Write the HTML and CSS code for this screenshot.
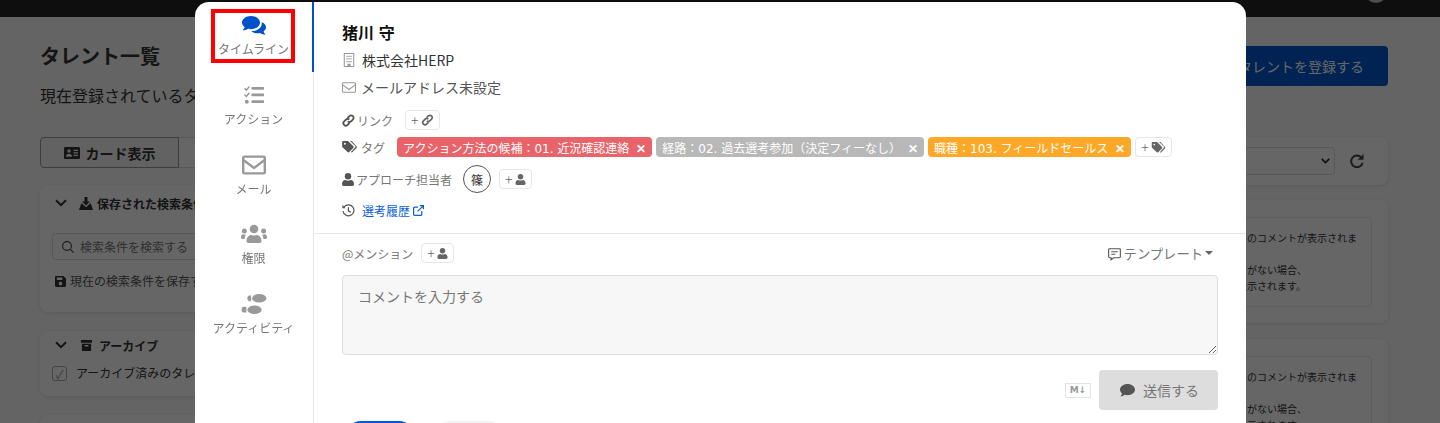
FILE: index.html
```html
<!DOCTYPE html>
<html lang="ja">
<head>
    <meta charset="UTF-8">
    <title>タレント一覧</title>
    <link rel="stylesheet" href="styles.css">
</head>
<body>

<svg class="sprite" xmlns="http://www.w3.org/2000/svg">
    <symbol id="i-comments" viewBox="0 0 24 20">
        <path d="M9 0c5 0 9 2.900 9 6.600s-4 6.600-9 6.600c-1.100 0-2.100-.1-3-.4C4.700 13.800 2.600 14.500.6 14.500c1-1 1.800-2.200 2-3.400C1 9.900 0 8.300 0 6.600 0 2.900 4 0 9 0z"/>
        <path d="M19.700 6.200c2.600.9 4.300 2.800 4.300 5 0 1.600-.9 3-2.400 4.100.2 1.200.9 2.300 2 3.400-2 0-4-.7-5.400-1.700-.8.200-1.700.3-2.600.3-2.600 0-4.900-.9-6.300-2.300 6.300.2 11.300-3.600 10.400-8.800z"/>
    </symbol>
    <symbol id="i-tasks" viewBox="0 0 20 20">
        <path d="M1 2.800l1.300 1.300L5 1l1 1-3.700 4.200L0 3.800zM1 9l1.300 1.300L5 7.200l1 1-3.700 4.200L0 10z"/>
        <circle cx="2.800" cy="16.700" r="2"/>
        <rect x="7.500" y="2" width="12.500" height="2.700" rx=".6"/>
        <rect x="7.500" y="8.600" width="12.500" height="2.700" rx=".6"/>
        <rect x="7.500" y="15.300" width="12.500" height="2.700" rx=".6"/>
    </symbol>
    <symbol id="i-mail" viewBox="0 0 20 16">
        <path d="M2 0h16a2 2 0 0 1 2 2v12a2 2 0 0 1-2 2H2a2 2 0 0 1-2-2V2a2 2 0 0 1 2-2zm0 2v1.200l8 6.100 8-6.100V2zm16 3.700l-8 6.100-8-6.100V14h16z"/>
    </symbol>
    <symbol id="i-users" viewBox="0 0 26 19">
        <circle cx="13" cy="4.500" r="4.300"/>
        <circle cx="3.400" cy="6.500" r="2.500"/>
        <circle cx="22.600" cy="6.500" r="2.500"/>
        <path d="M5.500 16.500c0-3.500 2.200-6 5-6 .8.400 1.600.600 2.500.600s1.700-.200 2.500-.600c2.800 0 5 2.500 5 6 0 1.300-.8 2-2 2h-11c-1.200 0-2-.700-2-2z"/>
        <path d="M0 12.800c0-1.800 1-3 2.400-3 .4.300.8.400 1.300.4.500 0 1-.1 1.400-.3-.9 1.200-1.400 2.800-1.500 4.600H1.200C.5 14.500 0 13.900 0 12.800zM26 12.800c0 1.100-.5 1.700-1.200 1.700h-2.400c-.1-1.800-.6-3.400-1.500-4.600.4.200.9.300 1.400.3.500 0 .9-.1 1.300-.4 1.400 0 2.400 1.200 2.400 3z"/>
    </symbol>
    <symbol id="i-shoes" viewBox="0 0 26 21">
        <ellipse cx="18.500" cy="4.500" rx="7.500" ry="4.500"/>
        <path d="M8 1.500h2v6H8C6.800 7.500 6 6 6 4.500s.8-3 2-3z"/>
        <ellipse cx="13.500" cy="16.500" rx="7.500" ry="4.500"/>
        <path d="M2 13.500h3v6H2c-1.200 0-2-1.500-2-3s.8-3 2-3z"/>
    </symbol>
    <symbol id="i-building" viewBox="0 0 12 16">
        <path d="M0 0h12v16H0zm1.200 1.200v13.600h3v-2.600h3.600v2.600h3V1.200zM3 3h1.500v1.500H3zm2.300 0h1.500v1.500H5.300zm2.200 0H9v1.500H7.500zM3 6h1.500v1.500H3zm2.300 0h1.500v1.500H5.300zm2.200 0H9v1.500H7.500zM3 9h1.500v1.500H3zm2.300 0h1.500v1.500H5.300zm2.200 0H9v1.500H7.500z"/>
    </symbol>
    <symbol id="i-mail-o" viewBox="0 0 16 12">
        <path d="M1.500 0h13A1.500 1.500 0 0 1 16 1.500v9a1.500 1.500 0 0 1-1.500 1.500h-13A1.500 1.500 0 0 1 0 10.500v-9A1.500 1.500 0 0 1 1.500 0zm0 1.200a.3.300 0 0 0-.3.300v1l6.800 5 6.800-5v-1a.3.300 0 0 0-.3-.3zM14.800 4L8 9 1.200 4v6.500c0 .2.100.3.300.3h13c.2 0 .3-.1.300-.3z"/>
    </symbol>
    <symbol id="i-link" viewBox="0 0 14 14" >
        <path fill="none" stroke="currentColor" stroke-width="2" d="M6 4.300l2-2a2.500 2.500 0 0 1 3.700 3.700l-2 2a2.500 2.500 0 0 1-3.500 0M8 9.700l-2 2A2.500 2.500 0 0 1 2.300 8l2-2a2.500 2.500 0 0 1 3.500 0"/>
    </symbol>
    <symbol id="i-tags" viewBox="0 0 16 13">
        <path d="M0 1.300C0 .6.600 0 1.300 0h4.400c.4 0 .7.100 1 .4l5.400 5.400c.5.500.5 1.300 0 1.800l-4.400 4.400c-.5.500-1.300.5-1.800 0L.4 6.700C.100 6.400 0 6.100 0 5.700zM3 2a1 1 0 1 0 0 2 1 1 0 0 0 0-2z"/>
        <path d="M8.600 0h1c.4 0 .7.100 1 .4l5 5.400c.5.500.5 1.300 0 1.800l-4.300 4.400c-.5.500-1.200.5-1.700 0l4.700-5.300c.4-.4.400-1 0-1.400z"/>
    </symbol>
    <symbol id="i-user" viewBox="0 0 12 13">
        <circle cx="6" cy="3.300" r="3.200"/>
        <path d="M0 11.300c0-2.700 1.500-4.200 3.400-4.200.8.400 1.700.6 2.600.6s1.800-.2 2.600-.6c1.900 0 3.400 1.500 3.400 4.200 0 1-.7 1.700-1.600 1.700H1.600C.7 13 0 12.300 0 11.300z"/>
    </symbol>
    <symbol id="i-history" viewBox="0 0 14 14">
        <path fill="none" stroke="currentColor" stroke-width="1.300" d="M2.300 3.200A5.900 5.900 0 1 1 1.100 7.500M6.900 3.500v3.900l2.500 1.600"/>
        <path d="M.4 1v3.700h3.700z"/>
    </symbol>
    <symbol id="i-external" viewBox="0 0 11 11">
        <path fill="none" stroke="currentColor" stroke-width="1.200" d="M8.800 6v3.400a1 1 0 0 1-1 1H1.600a1 1 0 0 1-1-1V3.200a1 1 0 0 1 1-1H5M6.800.6h3.600v3.600M10.200.8L4.600 6.400"/>
    </symbol>
    <symbol id="i-template" viewBox="0 0 14 14">
        <path fill="none" stroke="currentColor" stroke-width="1.200" d="M1.700.8h10.600a1 1 0 0 1 1 1v7.700a1 1 0 0 1-1 1H6l-2.700 2.200v-2.200H1.700a1 1 0 0 1-1-1V1.800a1 1 0 0 1 1-1zM3.500 4h7M3.500 6.800h4.500"/>
    </symbol>
    <symbol id="i-comment" viewBox="0 0 15 13">
        <path d="M7.500 0C11.600 0 15 2.500 15 5.600s-3.400 5.600-7.500 5.600c-1 0-2-.1-2.900-.4C3.600 11.600 2.100 12.500.5 12.500c.8-.9 1.400-1.900 1.500-3C.8 8.500 0 7.100 0 5.600 0 2.500 3.400 0 7.500 0z"/>
    </symbol>
    <symbol id="i-idcard" viewBox="0 0 16 12">
        <path d="M1.300 0h13.400C15.400 0 16 .6 16 1.300v9.400c0 .7-.6 1.300-1.300 1.300H1.300C.6 12 0 11.400 0 10.700V1.300C0 .6.600 0 1.300 0zM5 2.300a1.700 1.700 0 1 0 0 3.400 1.700 1.700 0 0 0 0-3.400zM2 9.700h6c0-1.800-1.200-3-3-3s-3 1.200-3 3zm7.500-6.900V4H14V2.800zm0 2.500v1.200H14V5.300zm0 2.500V9H14V7.800z" fill-rule="evenodd"/>
    </symbol>
    <symbol id="i-inbox" viewBox="0 0 14 13">
        <path d="M5.500 0h3v4.500H11L7 8.500l-4-4h2.500zM3 6.500l3.600 3.500h.8L11 6.500h.8L14 13H0l2.200-6.500z"/>
    </symbol>
    <symbol id="i-save" viewBox="0 0 12 12">
        <path d="M1.300 0h7.900L12 2.800v7.900c0 .7-.6 1.300-1.300 1.300H1.300C.6 12 0 11.400 0 10.700V1.300C0 .6.600 0 1.300 0zM2 1.700v2.600h6V1.700zM6 6.300a2 2 0 1 0 0 4 2 2 0 0 0 0-4z" fill-rule="evenodd"/>
    </symbol>
    <symbol id="i-archive" viewBox="0 0 12 12">
        <path d="M0 0h12v3H0zM1 4h10v8H1zm3 1.500V7h4V5.500z" fill-rule="evenodd"/>
    </symbol>
    <symbol id="i-search" viewBox="0 0 12 12">
        <path fill="none" stroke="currentColor" stroke-width="1.100" d="M5 .6a4.400 4.400 0 1 0 0 8.800A4.400 4.400 0 0 0 5 .6zM8.200 8.200l3.400 3.400"/>
    </symbol>
    <symbol id="i-chevron" viewBox="0 0 12 8">
        <path fill="none" stroke="currentColor" stroke-width="2" d="M1 1.200l5 5 5-5"/>
    </symbol>
    <symbol id="i-redo" viewBox="0 0 14 14">
        <path fill="none" stroke="currentColor" stroke-width="2" d="M11.200 3.400A5.800 5.800 0 1 0 12.600 8.800"/>
        <path d="M13.500 0v5.700H7.800z"/>
    </symbol>
</svg>

<div class="page">
    <div class="topbar"><span class="avatar"></span></div>
    <div class="content">
        <div class="title-row">
            <h1>タレント一覧</h1>
            <button class="btn-register">タレントを登録する</button>
        </div>
        <p class="lead">現在登録されているタレントの一覧です</p>

        <div class="columns">
            <div class="col-left">
                <div class="view-tabs">
                    <div class="view-tab"><svg class="ic ic-card"><use href="#i-idcard"/></svg>カード表示</div>
                    <div class="view-tab view-tab-off">リスト表示</div>
                </div>
                <section class="card card-saved">
                    <div class="card-head">
                        <svg class="ic ic-chev"><use href="#i-chevron"/></svg>
                        <svg class="ic ic-head"><use href="#i-inbox"/></svg>
                        <b>保存された検索条件</b>
                    </div>
                    <div class="search-box"><svg class="ic ic-search"><use href="#i-search"/></svg>検索条件を検索する</div>
                    <div class="save-line"><svg class="ic ic-save"><use href="#i-save"/></svg>現在の検索条件を保存する</div>
                </section>
                <section class="card card-archive">
                    <div class="card-head">
                        <svg class="ic ic-chev"><use href="#i-chevron"/></svg>
                        <svg class="ic ic-head ic-arch"><use href="#i-archive"/></svg>
                        <b>アーカイブ</b>
                    </div>
                    <label class="check-line"><span class="check">✓</span>アーカイブ済みのタレントを表示</label>
                </section>
                <section class="card card-last"></section>
            </div>

            <div class="col-right">
                <section class="card toolbar">
                    <div class="select-box"><svg class="ic ic-select"><use href="#i-chevron"/></svg></div>
                    <svg class="ic ic-redo"><use href="#i-redo"/></svg>
                </section>
                <section class="card result-card">
                    <div class="result-box">
                        <p>のコメントが表示されま</p>
                        <p>&nbsp;</p>
                        <p>がない場合、</p>
                        <p class="result-end">表示されます。</p>
                    </div>
                </section>
                <section class="card result-card">
                    <div class="result-box">
                        <p>のコメントが表示されま</p>
                        <p>&nbsp;</p>
                        <p>がない場合、</p>
                        <p class="result-end">表示されます。</p>
                    </div>
                </section>
            </div>
        </div>
    </div>
</div>

<div class="overlay"></div>

<div class="modal">
    <nav class="side">
        <a class="side-item active"><svg class="side-ic"><use href="#i-comments"/></svg>タイムライン</a>
        <a class="side-item"><svg class="side-ic"><use href="#i-tasks"/></svg>アクション</a>
        <a class="side-item"><svg class="side-ic"><use href="#i-mail"/></svg>メール</a>
        <a class="side-item"><svg class="side-ic ic-users"><use href="#i-users"/></svg>権限</a>
        <a class="side-item"><svg class="side-ic ic-users"><use href="#i-shoes"/></svg>アクティビティ</a>
    </nav>

    <div class="main">
        <div class="profile">
            <h2>猪川 守</h2>
            <div class="info-line"><svg class="ic ic-info ic-bld"><use href="#i-building"/></svg>株式会社HERP</div>
            <div class="info-line info-mail"><svg class="ic ic-info"><use href="#i-mail-o"/></svg>メールアドレス未設定</div>

            <div class="meta-row row-link">
                <span class="meta-label"><svg class="ic ic-meta"><use href="#i-link"/></svg>リンク</span>
                <button class="add-btn">+<svg class="ic ic-add-link"><use href="#i-link"/></svg></button>
            </div>
            <div class="meta-row row-tags">
                <span class="meta-label"><svg class="ic ic-tag"><use href="#i-tags"/></svg>タグ</span>
                <div class="tags">
                    <span class="tag tag-red">アクション方法の候補：01. 近況確認連絡<i>✕</i></span>
                    <span class="tag tag-gray">経路：02. 過去選考参加（決定フィーなし）<i>✕</i></span>
                    <span class="tag tag-orange">職種：103. フィールドセールス<i>✕</i></span>
                    <button class="add-btn">+<svg class="ic ic-add-tag"><use href="#i-tags"/></svg></button>
                </div>
            </div>
            <div class="meta-row row-owner">
                <span class="meta-label"><svg class="ic ic-meta ic-person"><use href="#i-user"/></svg>アプローチ担当者</span>
                <span class="person">篠</span>
                <button class="add-btn">+<svg class="ic ic-add"><use href="#i-user"/></svg></button>
            </div>
            <div class="meta-row row-history">
                <svg class="ic ic-meta"><use href="#i-history"/></svg>
                <a class="history-link">選考履歴<svg class="ic ic-ext"><use href="#i-external"/></svg></a>
            </div>
        </div>

        <div class="composer">
            <div class="mention-row">
                <span class="mention">@メンション</span>
                <button class="add-btn">+<svg class="ic ic-add"><use href="#i-user"/></svg></button>
                <span class="template"><svg class="ic ic-tpl"><use href="#i-template"/></svg>テンプレート<span class="caret"></span></span>
            </div>
            <textarea class="comment" placeholder="コメントを入力する"></textarea>
            <div class="send-row">
                <span class="md-badge">M↓</span>
                <button class="send"><svg class="ic ic-send"><use href="#i-comment"/></svg>送信する</button>
            </div>
            <div class="foot-row">
                <span class="foot-btn foot-primary"></span>
                <span class="foot-btn foot-plain"></span>
            </div>
        </div>
    </div>
</div>

<!-- 説明用の赤枠 -->
<div class="callout"></div>

</body>
</html>
```

FILE: styles.css
```css
/* ベース */
* {
    box-sizing: border-box;
}
html, body {
    margin: 0;
    height: 423px;
    overflow: hidden;
}
body {
    font-family: "Noto Sans CJK JP", "Noto Sans", sans-serif;
    font-size: 12px;
    color: #333;
    background: #fbfbfb;
    text-spacing-trim: space-all;
}
p, h1, h2 {
    margin: 0;
}
button {
    font-family: inherit;
}
.sprite {
    display: none;
}
.ic {
    display: inline-block;
    fill: currentColor;
    flex: none;
}

/* 背景のページ */
.topbar {
    height: 17px;
    background: #242424;
    position: relative;
}
.avatar {
    position: absolute;
    left: 1365px;
    top: -19px;
    width: 22px;
    height: 22px;
    border-radius: 50%;
    background: #c9c0b8;
}
.content {
    padding: 29px 52px 0 40px;
}
.title-row {
    display: flex;
    justify-content: space-between;
    align-items: flex-start;
    height: 40px;
}
h1 {
    font-size: 20px;
    font-weight: 700;
    line-height: 20px;
}
.btn-register {
    width: 200px;
    height: 40px;
    border: none;
    border-radius: 4px;
    background: #0057d0;
    color: #fff;
    font-size: 14px;
    padding: 0 24px;
    text-align: right;
}
.lead {
    font-size: 16px;
    line-height: 20px;
    margin-top: -1px;
}
.columns {
    display: flex;
    gap: 20px;
    margin-top: 32px;
    align-items: flex-start;
}
.col-left {
    width: 300px;
    flex: none;
}
.col-right {
    flex: 1;
}
.view-tabs {
    display: flex;
    height: 31px;
    margin-bottom: 17px;
}
.view-tab {
    width: 139px;
    display: flex;
    align-items: center;
    justify-content: center;
    gap: 6px;
    font-size: 14px;
    font-weight: 700;
    border: 1px solid #999;
    background: #f4f4f4;
    border-radius: 4px 0 0 4px;
}
.view-tab-off {
    font-weight: 400;
    border: 1px solid #ddd;
    border-left: none;
    background: #fff;
    border-radius: 0 4px 4px 0;
}
.ic-card {
    width: 16px;
    height: 12px;
}
.card {
    background: #fff;
    border-radius: 8px;
    box-shadow: 0 1px 4px rgba(0, 0, 0, 0.12);
    margin-bottom: 19px;
}
.card-saved {
    height: 127px;
    padding: 12px;
}
.card-archive {
    height: 65px;
    padding: 8px 12px;
}
.card-last {
    height: 60px;
}
.card-head {
    display: flex;
    align-items: center;
    height: 16px;
    padding-left: 1px;
    margin-top: -2px;
}
.card-head b {
    font-size: 12px;
}
.ic-chev {
    width: 12px;
    height: 8px;
    margin: 0 12px 0 2px;
    color: #333;
}
.ic-head {
    width: 14px;
    height: 13px;
    margin-right: 4px;
    color: #333;
}
.ic-arch {
    width: 11px;
    height: 11px;
    margin: 0 7px 0 2px;
}
.search-box {
    display: flex;
    align-items: center;
    gap: 6px;
    height: 27px;
    margin-top: 22px;
    padding-left: 9px;
    border: 1px solid #ddd;
    border-radius: 4px;
    color: #777;
}
.ic-search {
    width: 12px;
    height: 12px;
    color: #444;
}
.save-line {
    display: flex;
    align-items: center;
    gap: 4px;
    margin-top: 12px;
    padding-left: 3px;
    color: #555;
    line-height: 18px;
}
.ic-save {
    width: 11px;
    height: 11px;
    color: #333;
}
.check-line {
    display: flex;
    align-items: center;
    gap: 9px;
    margin-top: 12px;
    line-height: 16px;
}
.check {
    width: 15px;
    height: 15px;
    border: 1px solid #aaa;
    border-radius: 3px;
    font-size: 12px;
    line-height: 13px;
    text-align: center;
    color: #999;
}

.toolbar {
    display: flex;
    align-items: center;
    height: 48px;
    margin-bottom: 15px;
    padding: 0 24px 0 10px;
}
.select-box {
    position: relative;
    flex: 1;
    height: 28px;
    border: 1px solid #ddd;
    border-radius: 4px;
    margin-right: 15px;
}
.ic-select {
    position: absolute;
    right: 4px;
    top: 10px;
    width: 9px;
    height: 6px;
    color: #222;
}
.ic-redo {
    width: 14px;
    height: 14px;
    color: #444;
}
.result-card {
    height: 123px;
    padding: 17px 16px;
    margin-bottom: 16px;
}
.result-box {
    height: 90px;
    border: 1px solid #e8e8e8;
    border-radius: 4px;
    padding: 12px 0 0 870px;
    font-size: 10px;
    line-height: 16px;
    white-space: nowrap;
}
.result-end {
    margin-left: -10px;
}

.overlay {
    position: fixed;
    inset: 0;
    background: rgba(0, 0, 0, 0.6);
}

/* モーダル */
.modal {
    position: absolute;
    left: 195px;
    top: 2px;
    width: 1051px;
    height: 600px;
    background: #fff;
    border-radius: 14px;
    display: flex;
}
.side {
    width: 119px;
    flex: none;
    border-right: 1px solid #e6e6e6;
}
.side-item {
    display: flex;
    flex-direction: column;
    align-items: center;
    height: 69.500px;
    padding-top: 13px;
    color: #777;
    line-height: 18px;
    fill: #999;
    position: relative;
    margin-right: -1px;
    border-right: 2px solid transparent;
}
.side-item.active {
    border-right-color: #0052cc;
    fill: #0052cc;
    height: 70px;
    padding-top: 14px;
}
.side-ic {
    width: 24px;
    height: 20px;
    margin-bottom: 5px;
}
.active .side-ic {
    margin-bottom: 4px;
}
.ic-users {
    width: 26px;
}
.main {
    flex: 1;
    min-width: 0;
}
.profile {
    padding: 20px 28px 0;
    height: 232px;
    border-bottom: 1px solid #e8e8e8;
}
h2 {
    font-size: 16px;
    line-height: 20px;
    color: #111;
    word-spacing: 1px;
}
.info-line {
    display: flex;
    align-items: center;
    height: 20px;
    margin-top: 8px;
    font-size: 14px;
    color: #333;
}
.info-mail {
    margin-top: 7px;
    color: #555;
}
.ic-info {
    width: 14px;
    height: 11px;
    margin-right: 6px;
    color: #999;
}
.info-mail .ic-info {
    margin-right: 5px;
}
.ic-bld {
    height: 14px;
}
.meta-row {
    display: flex;
    align-items: center;
    color: #777;
}
.row-link {
    margin-top: 11px;
    height: 24px;
}
.row-tags {
    margin-top: 3px;
    height: 24px;
    gap: 12px;
}
.row-owner {
    margin-top: 4px;
    height: 32px;
    gap: 11px;
}
.row-history {
    margin-top: 3px;
    height: 24px;
    gap: 5px;
}
.meta-label {
    display: flex;
    align-items: center;
    gap: 2px;
}
.row-tags .meta-label {
    gap: 4px;
}
.row-link .meta-label {
    margin-right: 12px;
}
.row-owner .add-btn {
    margin-left: -3px;
}
.ic-meta {
    width: 13px;
    height: 13px;
    color: #555;
}
.ic-person {
    width: 12px;
}
.ic-tag {
    width: 15px;
    height: 12px;
    color: #555;
}
.add-btn {
    display: inline-flex;
    align-items: center;
    justify-content: center;
    gap: 2px;
    height: 20px;
    padding: 0 5px;
    background: #fff;
    border: 1px solid #e6e6e6;
    border-radius: 4px;
    font-size: 14px;
    font-weight: 300;
    color: #666;
}
.ic-add {
    width: 11px;
    height: 11px;
}
.ic-add-link {
    width: 13px;
    height: 12px;
}
.ic-add-tag {
    width: 15px;
    height: 11px;
}
.tags {
    display: flex;
    gap: 4px;
}
.tag {
    display: inline-flex;
    align-items: center;
    height: 20px;
    padding: 0 6px;
    border-radius: 4px;
    font-family: "DejaVu Sans", "Noto Sans CJK JP", sans-serif;
    color: #fff;
    white-space: nowrap;
}
.tag i {
    width: 10px;
    margin-left: 7px;
    font-family: "Noto Sans CJK JP", sans-serif;
    font-style: normal;
    font-size: 12px;
    font-weight: 700;
    text-align: center;
}
.tag-red {
    background: #e8636a;
}
.tag-gray {
    background: #b8b8b8;
}
.tag-orange {
    background: #ffa726;
}
.person {
    width: 28px;
    height: 28px;
    border: 1px solid #555;
    border-radius: 50%;
    display: flex;
    align-items: center;
    justify-content: center;
    color: #333;
}
.history-link {
    display: flex;
    align-items: center;
    gap: 3px;
    margin-left: 2px;
    color: #0a5fd8;
}
.ic-ext {
    width: 11px;
    height: 11px;
}

.composer {
    padding: 8px 28px 0;
}
.mention-row {
    display: flex;
    align-items: center;
    gap: 8px;
    height: 22px;
    color: #777;
}
.template {
    display: flex;
    align-items: center;
    margin-left: auto;
    margin-right: 5px;
    font-size: 13.300px;
}
.ic-tpl {
    width: 13px;
    height: 13px;
    margin: 2px 3px 0 0;
    color: #555;
}
.caret {
    width: 0;
    height: 0;
    margin-left: 2px;
    border: 4px solid transparent;
    border-top-color: #666;
    border-bottom: none;
}
.comment {
    display: block;
    width: 100%;
    height: 80px;
    margin-top: 11px;
    padding: 10px 15px;
    background: #f7f7f7;
    border: 1px solid #ddd;
    border-radius: 4px;
    font-family: inherit;
    font-size: 14px;
    line-height: 20px;
}
.comment::placeholder {
    color: #777;
}
.send-row {
    display: flex;
    justify-content: flex-end;
    align-items: center;
    gap: 8px;
    margin-top: 15px;
}
.md-badge {
    width: 26px;
    height: 15px;
    border: 1px solid #e4e4e4;
    font-family: "DejaVu Sans", sans-serif;
    font-size: 9px;
    font-weight: 700;
    line-height: 13px;
    text-align: center;
    color: #999;
}
.send {
    display: flex;
    align-items: center;
    justify-content: center;
    gap: 8px;
    width: 119px;
    height: 40px;
    padding-left: 8px;
    border: none;
    border-radius: 4px;
    background: #ddd;
    font-size: 14px;
    color: #777;
}
.ic-send {
    width: 15px;
    height: 13px;
    color: #555;
}
.foot-row {
    display: flex;
    gap: 19px;
    margin: 11px 0 0 3px;
}
.foot-btn {
    width: 70px;
    height: 36px;
    border-radius: 16px;
}
.foot-primary {
    background: #0059d6;
}
.foot-plain {
    background: #f4f4f4;
}

.callout {
    position: absolute;
    left: 211px;
    top: 9px;
    width: 84px;
    height: 54px;
    border: 4px solid #f00;
}
```
